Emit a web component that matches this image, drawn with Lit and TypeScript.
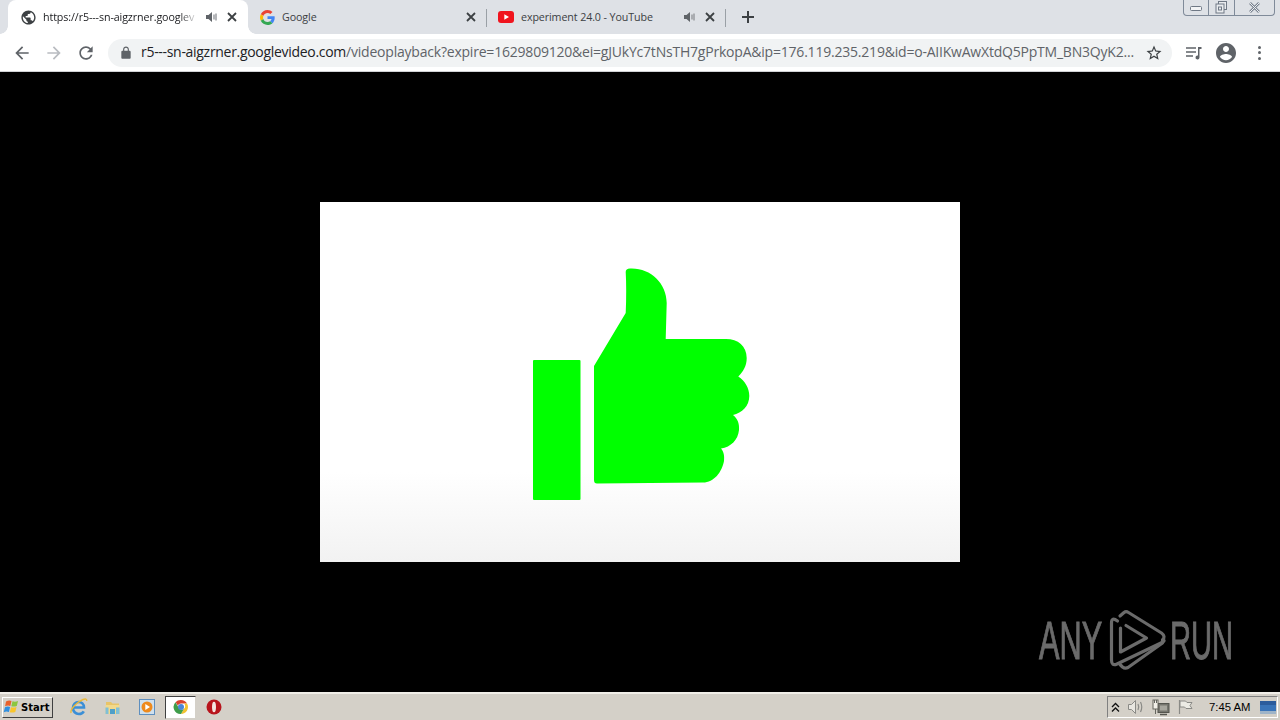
import { LitElement, html, css, svg } from "lit";
import { customElement } from "lit/decorators.js";

const P = {
  back: "M20 11H7.83l5.59-5.59L12 4l-8 8 8 8 1.41-1.41L7.83 13H20v-2z",
  fwd: "M12 4l-1.41 1.41L16.17 11H4v2h12.17l-5.58 5.59L12 20l8-8z",
  reload: "M17.65 6.35C16.2 4.9 14.21 4 12 4c-4.42 0-7.99 3.58-7.99 8s3.57 8 7.99 8c3.73 0 6.84-2.55 7.73-6h-2.08c-.82 2.33-3.04 4-5.65 4-3.31 0-6-2.69-6-6s2.69-6 6-6c1.66 0 3.14.69 4.22 1.78L13 11h7V4l-2.35 2.35z",
  globe: "M12 2C6.48 2 2 6.48 2 12s4.48 10 10 10 10-4.48 10-10S17.52 2 12 2zm-1 17.93c-3.95-.49-7-3.85-7-7.93 0-.62.08-1.21.21-1.79L9 15v1c0 1.1.9 2 2 2v1.93zm6.9-2.54c-.26-.81-1-1.39-1.9-1.39h-1v-3c0-.55-.45-1-1-1H8v-2h2c.55 0 1-.45 1-1V7h2c1.1 0 2-.9 2-2v-.41c2.93 1.19 5 4.06 5 7.41 0 2.08-.8 3.97-2.1 5.39z",
  lock: "M18 8h-1V6c0-2.76-2.24-5-5-5S7 3.24 7 6v2H6c-1.1 0-2 .9-2 2v10c0 1.1.9 2 2 2h12c1.1 0 2-.9 2-2V10c0-1.1-.9-2-2-2zM9 6c0-1.66 1.34-3 3-3s3 1.34 3 3v2H9V6z",
  star: "M22 9.24l-7.19-.62L12 2 9.19 8.63 2 9.24l5.46 4.73L5.82 21 12 17.27 18.18 21l-1.63-7.03L22 9.24zM12 15.4l-3.76 2.27 1-4.28-3.32-2.88 4.38-.38L12 6.1l1.71 4.04 4.38.38-3.32 2.88 1 4.28L12 15.4z",
  account: "M12 2C6.48 2 2 6.48 2 12s4.48 10 10 10 10-4.48 10-10S17.52 2 12 2zm0 3c1.66 0 3 1.34 3 3s-1.34 3-3 3-3-1.34-3-3 1.34-3 3-3zm0 14.2c-2.5 0-4.71-1.28-6-3.22.03-1.99 4-3.08 6-3.08 1.99 0 5.97 1.09 6 3.08-1.29 1.94-3.5 3.22-6 3.22z",
};

const mat = (d: string, size: number, cls = "") =>
  html`<svg class="ico ${cls}" width=${size} height=${size} viewBox="0 0 24 24"><path d=${d}></path></svg>`;

const speaker = html`<svg class="spk" width="16" height="16" viewBox="0 0 16 16">
  <path d="M3 6h2.5L9 3v10L5.500 10H3z" fill="#5f6368"></path>
  <path d="M11 5.500v5M13 4.500v7" stroke="#8d9095" stroke-width="1.300" fill="none"></path>
</svg>`;

const closeX = html`<svg class="x" width="16" height="16" viewBox="0 0 16 16">
  <path d="M4 4l8 8M12 4l-8 8" stroke="#3c4043" stroke-width="1.800" fill="none"></path>
</svg>`;

const gLogo = html`<svg width="15" height="15" viewBox="0 0 48 48">
  <path fill="#EA4335" d="M24 9.500c3.540 0 6.710 1.220 9.210 3.600l6.850-6.850C35.900 2.380 30.470 0 24 0 14.620 0 6.510 5.380 2.560 13.220l7.980 6.190C12.430 13.720 17.740 9.500 24 9.500z"></path>
  <path fill="#4285F4" d="M46.980 24.550c0-1.570-.15-3.090-.38-4.550H24v9.020h12.940c-.58 2.960-2.260 5.480-4.780 7.180l7.730 6c4.510-4.180 7.090-10.360 7.090-17.650z"></path>
  <path fill="#FBBC05" d="M10.530 28.590c-.48-1.450-.76-2.990-.76-4.590s.27-3.140.76-4.590l-7.980-6.190C.92 16.460 0 20.120 0 24c0 3.880.92 7.540 2.560 10.780l7.970-6.190z"></path>
  <path fill="#34A853" d="M24 48c6.480 0 11.930-2.130 15.890-5.810l-7.730-6c-2.150 1.450-4.920 2.300-8.160 2.300-6.260 0-11.570-4.220-13.470-9.910l-7.980 6.190C6.510 42.620 14.620 48 24 48z"></path>
</svg>`;

const ytLogo = html`<svg width="16" height="12" viewBox="0 0 16 12">
  <rect width="16" height="12" rx="3" fill="#f0141e"></rect>
  <path d="M6.300 3.300v5.400L11 6z" fill="#fff"></path>
</svg>`;

const startFlag = html`<svg width="18" height="18" viewBox="0 0 18 18">
  <path d="M3 3.500q3-1.500 5.500-.5l-1.200 5q-2.500-1-5.200.3z" fill="#e8612c"></path>
  <path d="M9.500 3.200q2.500 1 5.500-.2l-1.200 5q-3 1-5.500.2z" fill="#8cc63f"></path>
  <path d="M2 9.200q2.700-1.300 5.100-.2l-1.200 5q-2.500-1-5.200.2z" fill="#2f8fe0"></path>
  <path d="M8 9.200q2.500.8 5.500-.2l-1.200 5q-3 1-5.500.2z" fill="#f9c52b"></path>
</svg>`;

const ieIcon = html`<svg width="20" height="20" viewBox="0 0 20 20">
  <path d="M3.500 10.500h11.500c0-3.500-2.500-5.500-5.300-5.500-3.300 0-5.700 2.600-5.700 6s2.500 6 5.800 6c2.300 0 4-1 5-2.700" fill="none" stroke="#3b8fd6" stroke-width="2.600"></path>
  <path d="M2 16C1 12 8 5 14 2.500c2.500-1 4-.5 3.700 1.500" fill="none" stroke="#e9b93a" stroke-width="1.400"></path>
</svg>`;

const folderIcon = html`<svg width="18" height="18" viewBox="0 0 18 18">
  <path d="M2 4h5l1.500 1.500H15V8H2z" fill="#e8c468"></path>
  <rect x="1.500" y="7" width="14" height="9" fill="#f2d98c"></rect>
  <rect x="6" y="11" width="5" height="5" fill="#4f9fc9"></rect>
  <path d="M1.500 16V9.500h3V16zM12 16V9.500h3.500V16z" fill="#7fbfd8"></path>
</svg>`;

const wmpIcon = html`<svg width="16" height="16" viewBox="0 0 16 16">
  <rect x=".5" y=".5" width="15" height="15" fill="#cfe0ee" stroke="#5e8fbf"></rect>
  <circle cx="8" cy="8" r="5.500" fill="#ee8a1d"></circle>
  <path d="M6.300 5v6L11 8z" fill="#fff"></path>
</svg>`;

const chromeIcon = html`<svg width="16" height="16" viewBox="0 0 16 16">
  <path d="M8 1a7 7 0 0 1 6.060 3.500H8a3.500 3.500 0 0 0-3.200 2.100L2.500 3.200A7 7 0 0 1 8 1z" fill="#d8432f"></path>
  <path d="M14.060 4.500A7 7 0 0 1 8 15l3-5.200a3.500 3.500 0 0 0 0-5.300z" fill="#f2c230"></path>
  <path d="M8 15A7 7 0 0 1 2.500 3.200l3 5.300A3.500 3.500 0 0 0 11 9.800z" fill="#3f9d4a"></path>
  <circle cx="8" cy="8" r="3" fill="#4a86d8"></circle>
</svg>`;

const operaIcon = html`<svg width="16" height="16" viewBox="0 0 16 16">
  <circle cx="8" cy="8" r="7.500" fill="#b8141c"></circle>
  <ellipse cx="8" cy="8" rx="2" ry="5.300" fill="#f4e4e0"></ellipse>
</svg>`;

const trayArrows = html`<svg width="9" height="11" viewBox="0 0 9 11">
  <path d="M1 5l3.500-3.500L8 5M1 9.500L4.500 6 8 9.500" fill="none" stroke="#111" stroke-width="1.300"></path>
</svg>`;

const traySpeaker = html`<svg width="18" height="16" viewBox="0 0 18 16">
  <path d="M1.500 5.500h3L8.500 1.500v13l-4-4h-3z" fill="#e8e6e0" stroke="#8a8a86"></path>
  <path d="M11 5q1.500 3 0 6M13.500 3q2.500 5 0 10" fill="none" stroke="#8a8a86" stroke-width="1.200"></path>
</svg>`;

const trayNet = html`<svg width="18" height="17" viewBox="0 0 18 17">
  <rect x="6" y="4.500" width="11" height="9" fill="#76766f" stroke="#55554f"></rect>
  <rect x="8" y="6.500" width="7" height="5" fill="#a7a69e"></rect>
  <path d="M8 15.500h7" stroke="#55554f" stroke-width="1.500"></path>
  <rect x="1" y="1" width="5" height="9" fill="#f1efe8" stroke="#66665f"></rect>
  <path d="M2.500 1v3M4.500 1v3M3.500 10v5" stroke="#66665f"></path>
</svg>`;

const trayFlag = html`<svg width="16" height="16" viewBox="0 0 16 16">
  <path d="M2.500 1v14" stroke="#8a8a86" stroke-width="1.200"></path>
  <path d="M3 2h5.500l1.500 1.500h5L13 6.500l2 3H9L7.500 8H3z" fill="#ecebe4" stroke="#8a8a86"></path>
</svg>`;

const trayScreen = html`<svg width="16" height="13" viewBox="0 0 16 13">
  <rect width="16" height="11" fill="#3a74b8"></rect>
  <rect y="0" width="16" height="4" fill="#2c5c9c"></rect>
  <rect y="10" width="16" height="3" fill="#9fb4c8"></rect>
</svg>`;

const thumb = svg`<svg class="thumb" width="640" height="360" viewBox="320 202 640 360">
  <rect x="533" y="360" width="47.500" height="140" rx="1" fill="#00ff00"></rect>
  <path fill="#00ff00" d="M625.700 272 Q625.700 268.500 630 268.500 C650 267.500 666.700 283 666.700 303 L665.700 339 L726 339
    C738 339 746.700 346 746.700 358 C746.700 366 743 372 738.300 376.500
    C745 381 749.300 388 749.300 396 C749.300 406 742 413 733 415
    C738 419 739.500 424 739 430 C738 440 731 447 721 448.500
    C724 452 724.500 456 724 461 C722 472 714 482.500 703 482.500 L597 483.500 Q594 483.500 594 480 L594 366
    L625.700 313 Q626.700 290 625.700 272 Z"></path>
</svg>`;

const runLogo = svg`<svg class="runmark" width="60" height="66" viewBox="1108 608 60 66">
  <g fill="none" stroke="#6b6b6b" stroke-width="3.200" stroke-linejoin="round" stroke-linecap="round">
    <path d="M1117.500 621 Q1111.500 616.500 1111.500 623 L1111.500 660 Q1111.500 666.500 1117 664 L1162 642.500"></path>
    <path d="M1120 616 L1124 612.500 Q1126 611 1128.500 612.500 L1161.500 633 Q1166 636.500 1162.500 640"></path>
    <path d="M1162 642.500 Q1166 640 1162.500 640"></path>
    <path d="M1162.500 643 L1128 667.500 Q1125 669 1122.500 667 L1120 664.500"></path>
    <path d="M1120.500 628 L1120.500 652 L1146.500 638 L1126 625.500"></path>
  </g>
</svg>`;

@customElement("app-root")
export class AppRoot extends LitElement {
  static styles = css`
    :host { display: flex; flex-direction: column; width: 1280px; height: 720px; overflow: hidden; position: relative; background: #000; font-family: "Open Sans", "Noto Sans", sans-serif; }
    .ico { fill: #5f6368; display: block; flex: none; }
    .ico.dis { fill: #b9bcc1; }
    .ico.dark { fill: #3c4043; }
    .spk, .x { display: block; flex: none; }

    .strip { height: 34px; background: #dee1e6; display: flex; align-items: stretch; padding-left: 8px; flex: none; }
    .tab { width: 239px; flex: none; display: flex; align-items: center; box-sizing: border-box; padding: 0 8px 0 11px; position: relative; gap: 5px; }
    .tab.active { width: 240px; background: #fff; border-radius: 8px 8px 0 0; padding-left: 12px; }
    .tab.active::before, .tab.active::after { content: ""; position: absolute; bottom: 0; width: 8px; height: 8px; background: radial-gradient(circle at 0 0, transparent 7.500px, #fff 8px); }
    .tab.active::before { left: -8px; }
    .tab.active::after { right: -8px; background: radial-gradient(circle at 100% 0, transparent 7.500px, #fff 8px); }
    .tab.sep::after { content: ""; position: absolute; right: 0; top: 9px; height: 18px; width: 1px; background: #9aa0a6; }
    .fav { width: 16px; height: 16px; display: flex; align-items: center; justify-content: center; flex: none; margin-right: 2px; }
    .title { flex: 1; min-width: 0; white-space: nowrap; overflow: hidden; font-size: 10.700px; color: #3c4043; line-height: 16px; letter-spacing: -.1px; }
    .active .title { color: #202124; -webkit-mask-image: linear-gradient(to right, #000 88%, transparent 100%); mask-image: linear-gradient(to right, #000 88%, transparent 100%); }
    .plus { margin-left: 14px; align-self: center; display: block; flex: none; }
    .win { margin-left: auto; margin-right: 5px; align-self: flex-start; width: 92px; height: 16px; box-sizing: border-box; border: 1px solid #7f8a99; border-top: none; border-radius: 0 0 4px 4px; display: flex; background: #dee1e6; flex: none; }
    .win > div { display: flex; align-items: center; justify-content: center; }
    .w-min { width: 24px; border-right: 1px solid #7f8a99; }
    .w-max { width: 25px; border-right: 1px solid #7f8a99; }
    .w-close { flex: 1; }

    .bar { height: 38px; box-sizing: border-box; border-bottom: 1px solid #d0d2d5; background: #fff; display: flex; align-items: center; padding-left: 12px; flex: none; }
    .nav { display: flex; gap: 12px; }
    .pill { margin-left: 12px; width: 1064px; height: 28px; border-radius: 14px; background: #f1f3f4; display: flex; align-items: center; box-sizing: border-box; padding: 0 9px 0 11px; flex: none; }
    .url { flex: 1; min-width: 0; margin: 0 0 2px 8px; white-space: nowrap; overflow: hidden; font-size: 14px; color: #5f6368; letter-spacing: -.21px; line-height: 26px; }
    .url b { font-weight: 400; color: #202124; letter-spacing: -.3px; }
    .right { display: flex; align-items: center; gap: 11px; margin-left: 13px; }
    .dots { width: 20px; display: flex; flex-direction: column; align-items: center; gap: 2.500px; }
    .dots i { width: 3px; height: 3px; border-radius: 50%; background: #5f6368; display: block; }

    .stage { flex: 1; min-height: 0; background: #000; display: flex; align-items: center; justify-content: center; position: relative; }
    .video { width: 640px; height: 360px; background: linear-gradient(to bottom, #fff 0, #fff 75%, #f2f2f2 100%); }
    .thumb { display: block; }
    .mark { position: absolute; left: 1039px; top: 538px; height: 66px; display: block; width: 200px; }
    .mark span { position: absolute; top: 0; font-family: "Liberation Sans Narrow", "Liberation Sans", sans-serif; font-size: 53px; line-height: 62px; color: #6b6b6b; transform-origin: 0 0; white-space: nowrap; -webkit-text-stroke: 1px #6b6b6b; }
    .any { left: 0; transform: scaleX(.58); }
    .run { left: 131px; transform: scaleX(.55); }
    .runmark { position: absolute; left: 69px; top: -2px; }

    .task { height: 28px; box-sizing: border-box; background: #d4d0c8; border-top: 2px solid #f0eee8; display: flex; align-items: center; flex: none; padding-left: 2px; }
    .start { width: 51px; height: 21px; box-sizing: border-box; border: 1px solid; border-color: #fff #404040 #404040 #fff; background: #d4d0c8; display: flex; align-items: center; font: 700 10px "DejaVu Sans", sans-serif; color: #000; flex: none; }
    .quick { display: flex; align-items: center; margin-left: 9px; }
    .q { width: 34px; display: flex; justify-content: center; }
    .q.on { width: 31px; height: 23px; box-sizing: border-box; align-items: center; background: #fff; border: 1px solid; border-color: #404040 #d4d0c8 #d4d0c8 #404040; margin: 0 1px; }
    .tray { margin-left: auto; margin-right: 2px; width: 171px; height: 22px; box-sizing: border-box; border: 1px solid; border-color: #808080 #fff #fff #808080; display: flex; align-items: center; padding-left: 3px; flex: none; }
    .tray .a { width: 9px; margin-right: 7px; display: block; }
    .tray svg { display: block; flex: none; }
    .tray .s { margin-right: 7px; }
    .tray .n { margin-right: 7px; }
    .clock { margin-left: 16px; font: 400 11.300px "Liberation Sans", sans-serif; color: #000; white-space: nowrap; width: 44px; }
    .scr { margin-left: 7px; }
  `;

  render() {
    return html`
      <div class="strip">
        <div class="tab active">
          <span class="fav">${mat(P.globe, 17, "dark")}</span>
          <span class="title">https://r5---sn-aigzrner.googlev</span>
          ${speaker}${closeX}
        </div>
        <div class="tab sep">
          <span class="fav">${gLogo}</span>
          <span class="title">Google</span>
          ${closeX}
        </div>
        <div class="tab sep">
          <span class="fav">${ytLogo}</span>
          <span class="title">experiment 24.0 - YouTube</span>
          ${speaker}${closeX}
        </div>
        <svg class="plus" width="16" height="16" viewBox="0 0 16 16"><path d="M8 2v12M2 8h12" stroke="#3c4043" stroke-width="2" fill="none"></path></svg>
        <div class="win">
          <div class="w-min"><svg width="13" height="8" viewBox="0 0 13 8"><rect x=".5" y="2.500" width="11" height="4" rx="1" fill="#f2f3f5" stroke="#6f7885"></rect></svg></div>
          <div class="w-max"><svg width="13" height="13" viewBox="0 0 13 13"><rect x="3.500" y=".5" width="8" height="8" fill="#e9ebee" stroke="#6f7885"></rect><rect x="1" y="3" width="8" height="9" fill="#e9ebee" stroke="#6f7885"></rect><rect x="3.500" y="6" width="3" height="3" fill="none" stroke="#6f7885"></rect></svg></div>
          <div class="w-close"><svg width="13" height="11" viewBox="0 0 13 11"><path d="M2 1l9 9M11 1l-9 9" stroke="#7a8390" stroke-width="2.500" fill="none"></path><path d="M2 1l9 9M11 1l-9 9" stroke="#eceef1" stroke-width="1" fill="none"></path></svg></div>
        </div>
      </div>

      <div class="bar">
        <div class="nav">
          ${mat(P.back, 20)}
          ${mat(P.fwd, 20, "dis")}
          ${mat(P.reload, 20)}
        </div>
        <div class="pill">
          ${mat(P.lock, 14)}
          <div class="url"><b>r5---sn-aigzrner.googlevideo.com</b>/videoplayback?expire=1629809120&amp;ei=gJUkYc7tNsTH7gPrkopA&amp;ip=176.119.235.219&amp;id=o-AIIKwAwXtdQ5PpTM_BN3QyK2...</div>
          ${mat(P.star, 18, "dark")}
        </div>
        <div class="right">
          <svg width="18" height="16" viewBox="0 0 18 16"><path d="M1 3h10M1 7h10M1 11h7" stroke="#5f6368" stroke-width="1.500" fill="none"></path><path d="M13 2h3.500v2H14.500v8.500a2 2 0 1 1-1.500-2z" fill="#5f6368"></path></svg>
          ${mat(P.account, 24)}
          <div class="dots"><i></i><i></i><i></i></div>
        </div>
      </div>

      <div class="stage">
        <div class="video">${thumb}</div>
        <div class="mark">
          <span class="any">ANY</span>
          ${runLogo}
          <span class="run">RUN</span>
        </div>
      </div>

      <div class="task">
        <div class="start">${startFlag}<span>Start</span></div>
        <div class="quick">
          <div class="q">${ieIcon}</div>
          <div class="q">${folderIcon}</div>
          <div class="q">${wmpIcon}</div>
          <div class="q on">${chromeIcon}</div>
          <div class="q">${operaIcon}</div>
        </div>
        <div class="tray">
          <span class="a">${trayArrows}</span>
          <span class="s">${traySpeaker}</span>
          <span class="n">${trayNet}</span>
          ${trayFlag}
          <span class="clock">7:45 AM</span>
          <span class="scr">${trayScreen}</span>
        </div>
      </div>
    `;
  }
}
